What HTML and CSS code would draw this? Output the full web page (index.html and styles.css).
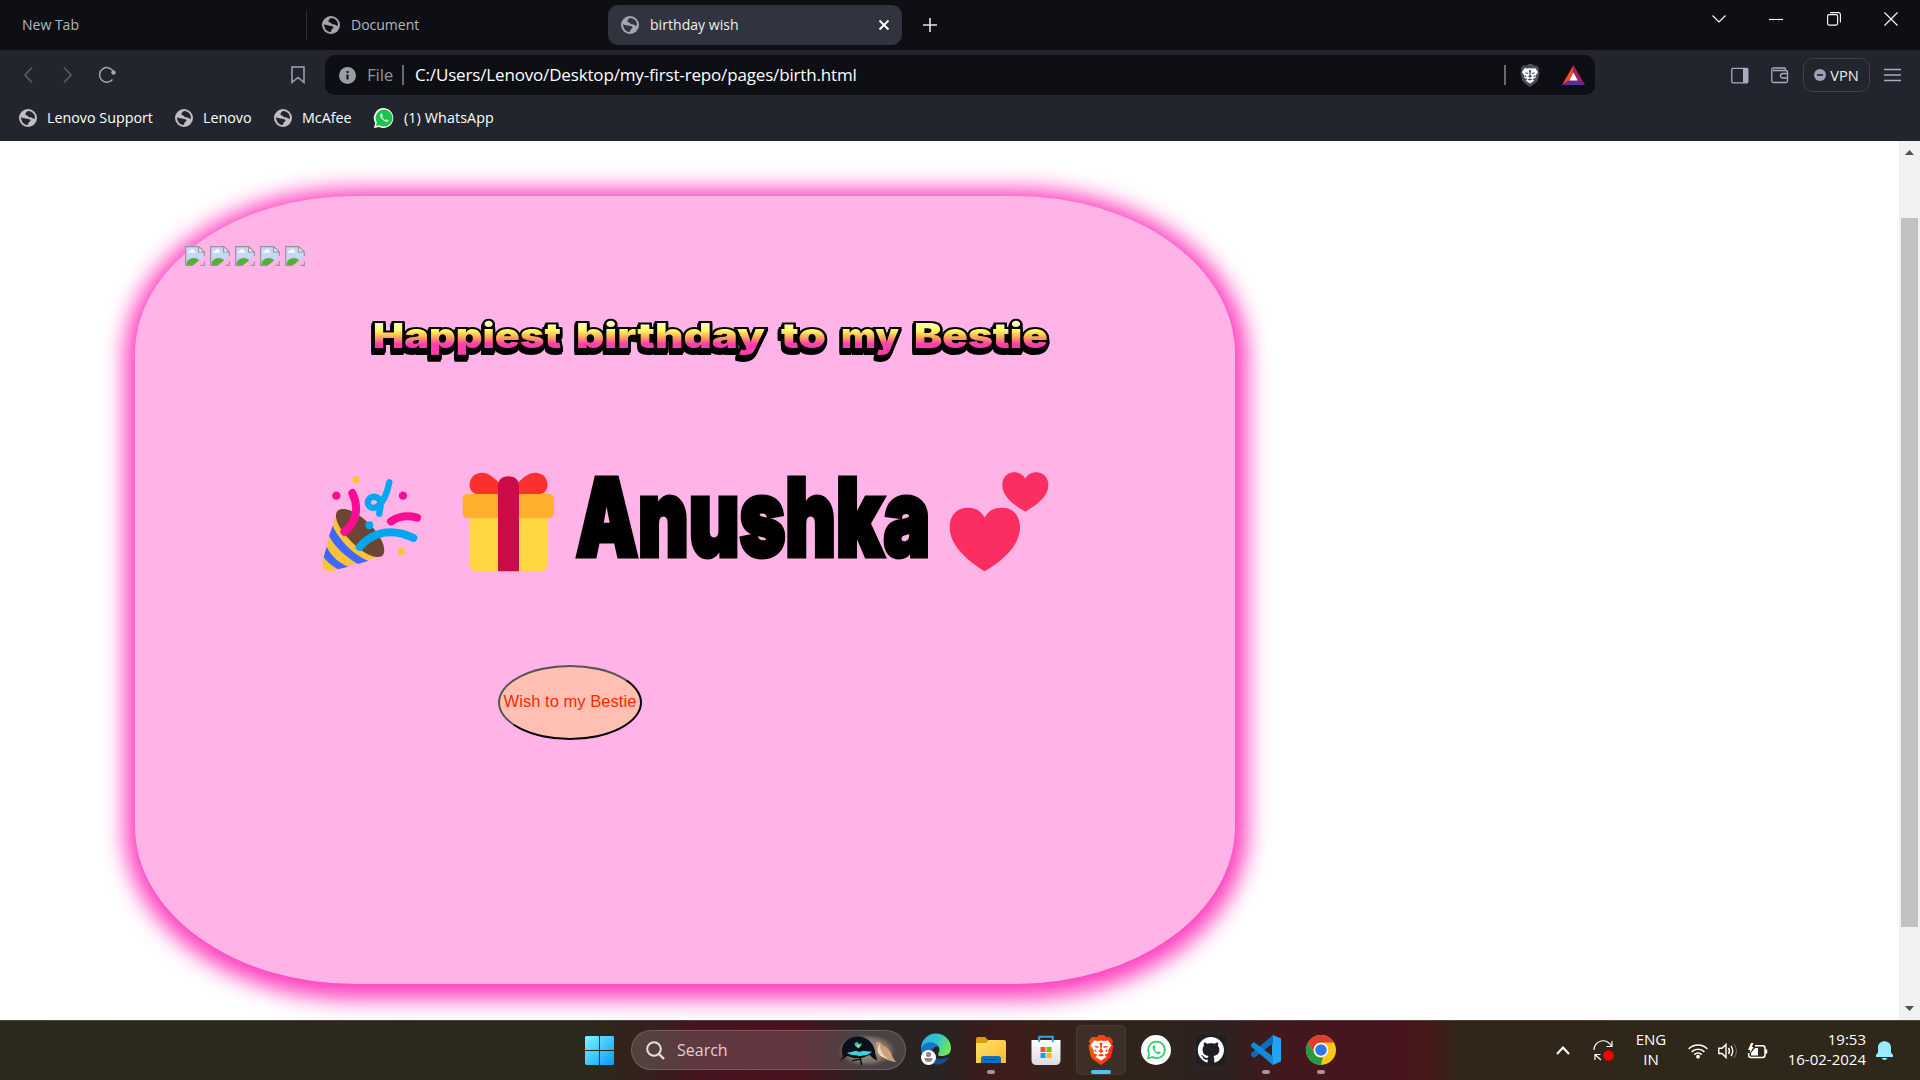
FILE: index.html
```html
<!DOCTYPE html>
<html lang="en">
<head>
<meta charset="utf-8">
<title>birthday wish</title>
<link rel="stylesheet" href="styles.css">
</head>
<body>
<svg class="defs" width="0" height="0">
  <defs>
    <symbol id="globe" viewBox="0 0 18 18"><circle cx="9" cy="9" r="9"/><path class="globe-sea" d="M9.2 2C11 2 13.500 3.200 15 5.200L16 8L15.500 10L13.700 9.200C12.700 8 12 8.700 10.500 8.300C9 8 9.400 6.600 8 6.500C5.700 6.300 6 3.500 9.200 2ZM2 8.200C3.600 9.300 5 9 6.700 9.400C9 10 11.600 9.800 11.500 11.500C11.300 13 9.700 12.700 9.400 14L9 15.900C5 15.900 2.300 13 2 8.200Z"/></symbol>
    <symbol id="broken" viewBox="0 0 60 60"><path d="M2 2H42L58 18V32L32 58H2Z" fill="#c5d7f4"/><path d="M5 57V48C14 34 32 33 43 43L27 58Z" fill="#59ae3b"/><path d="M9 20C9 14 15 14 16 14C18 6 27 8 27 14C31 14 31 20 28 20Z" fill="#fff"/><path d="M41 2V18H58Z" fill="#f7f7f7"/><path d="M27 58H2V2H41L58 18V30M41 2V18H58M46 58H58V46" fill="none" stroke="#969696" stroke-width="3.600"/><path d="M22 60L60 29V43L41 60Z" fill="#ffb3e6"/></symbol>
    <symbol id="lion" viewBox="0 0 26 30"><path d="M4 2L9 2L11 0H16L18 2L22 2L25 6L24 9L25.500 11L23 22Q22 24 13 30Q4 24 3 22L.5 11L2 9L1 6Z"/><path fill="#fff" d="M6 5.500L10 6L13 5.500L16 6L20 5.500L23.500 10.500L20 15.500L20.500 18L16.500 19.500L18.500 22L13 25.500L7.500 22L9.500 19.500L5.500 18L6 15.500L2.500 10.500Z"/><path d="M6 11L10.500 11.300L10.800 12.600L8.300 12.800ZM20 11L15.500 11.300L15.200 12.600L17.700 12.800ZM11.500 7.500L13 8L14.500 7.500L13.600 14L15.500 16.500L13 18L10.500 16.500L12.400 14ZM9.500 20.300L13 18.800L16.500 20.300L13 21.500ZM7 14L9 17L6.500 16.500ZM19 14L17 17L19.500 16.500Z"/></symbol>
    <linearGradient id="candy" gradientUnits="userSpaceOnUse" x1="0" y1="3" x2="0" y2="30"><stop offset="0" stop-color="#ffffe0"/><stop offset=".35" stop-color="#fffa66"/><stop offset=".58" stop-color="#ffae55"/><stop offset=".85" stop-color="#ff3eac"/><stop offset="1" stop-color="#ff3eac"/></linearGradient>
    <linearGradient id="win" x1="0" y1="0" x2="1" y2="1"><stop stop-color="#7df4ff"/><stop offset="1" stop-color="#079bff"/></linearGradient>
    <linearGradient id="edge1" x1="0" y1="0" x2="1" y2=".4"><stop stop-color="#2aa9ed"/><stop offset=".6" stop-color="#31c8c9"/><stop offset="1" stop-color="#6fe45b"/></linearGradient>
    <linearGradient id="fold" x1="0" y1="0" x2="1" y2="1"><stop stop-color="#ffe06b"/><stop offset="1" stop-color="#fcbd2b"/></linearGradient>
    <linearGradient id="brv" x1="0" y1="0" x2="1" y2="0"><stop stop-color="#ff5a08"/><stop offset="1" stop-color="#fb2a14"/></linearGradient>
    <linearGradient id="bag" x1="0" y1="0" x2="0" y2="1"><stop stop-color="#fff"/><stop offset="1" stop-color="#dcdcdc"/></linearGradient>
  </defs>
</svg>

<header class="chrome">
  <div class="tabs">
    <div class="tab tab-new"><span>New Tab</span></div>
    <div class="tab tab-doc"><svg class="globe dark"><use href="#globe"/></svg><span>Document</span></div>
    <div class="tab tab-active"><svg class="globe active"><use href="#globe"/></svg><span class="tab-title">birthday wish</span>
      <svg class="close" viewBox="0 0 10 10"><path d="M.5.5L9.500 9.500M9.500.5L.5 9.500"/></svg></div>
    <svg class="plus" viewBox="0 0 14 14"><path d="M7 0V14M0 7H14"/></svg>
    <div class="winbtns">
      <svg width="14" height="8" viewBox="0 0 14 8"><path d="M.5.5L7 7L13.500.5"/></svg>
      <svg width="14" height="14" viewBox="0 0 14 14"><path d="M0 7.500H14"/></svg>
      <svg width="14" height="14" viewBox="0 0 14 14"><rect x=".6" y="2.600" width="10" height="10.500" rx="1.500"/><path d="M3 .6H11.500Q13.400.6 13.400 2.500V10.500"/></svg>
      <svg width="14" height="14" viewBox="0 0 14 14"><path d="M.5.5L13.500 13.500M13.500.5L.5 13.500"/></svg>
    </div>
  </div>
  <div class="toolbar">
    <div class="nav">
      <svg class="dim" width="9" height="16" viewBox="0 0 9 16"><path d="M8 .5L1 8L8 15.500"/></svg>
      <svg class="dim" width="9" height="16" viewBox="0 0 9 16"><path d="M1 .5L8 8L1 15.500"/></svg>
      <svg class="reload" width="18" height="18" viewBox="0 0 18 18"><path d="M14.500 13.500A7.300 7.300 0 1 1 15.500 6"/><circle cx="15.500" cy="6.500" r="2.200"/></svg>
      <svg class="mark" width="14" height="18" viewBox="0 0 14 18"><path d="M1 1H13V16.500L7 11.500L1 16.500Z"/></svg>
    </div>
    <div class="omnibox">
      <svg class="info" width="17" height="17" viewBox="0 0 17 17"><circle cx="8.500" cy="8.500" r="8.500" fill="#9a9da3"/><path d="M8.500 7.500V12.500M8.500 4V6" stroke="#0e0f14" stroke-width="2"/></svg>
      <span class="scheme">File</span><i class="bar"></i><span class="url">C:/Users/Lenovo/Desktop/my-first-repo/pages/birth.html</span>
      <i class="bar end"></i>
      <svg class="shield" width="20" height="23"><use href="#lion"/></svg>
      <svg class="bat" width="23" height="20" viewBox="0 0 23 20"><path d="M11.500 0L0 20L8 15L11.500 8Z" fill="#ff4724"/><path d="M11.500 0L23 20L15 15L11.500 8Z" fill="#9e1f63"/><path d="M0 20H23L15.500 15H7.500Z" fill="#662d91"/><path d="M11.500 7.500L15.700 15.500H7.300Z" fill="#fff"/></svg>
    </div>
    <div class="tools">
      <svg width="18" height="17" viewBox="0 0 18 17"><rect x=".8" y="1.300" width="16" height="14.500" rx="1"/><path class="solid" d="M12 1H17V16H12Z"/></svg>
      <svg width="18" height="17" viewBox="0 0 18 17"><path d="M14.500 3.500V2Q14.500 1 13.500 1H2.500Q.8 1 .8 2.500V14Q.8 15.500 2.500 15.500H15Q16.500 15.500 16.500 14V5Q16.500 3.500 15 3.500H2M17 6.500H12Q9.500 6.500 9.500 8.700T12 11H17"/></svg>
      <div class="vpn"><svg width="12" height="12" viewBox="0 0 12 12"><circle cx="6" cy="6" r="6" fill="#9ea1b5" stroke="none"/><path d="M3 6H9" stroke="#22252d" stroke-width="1.700"/></svg><span>VPN</span></div>
      <svg width="17" height="14" viewBox="0 0 17 14"><path d="M0 1.500H17M0 7H17M0 12.500H17"/></svg>
    </div>
  </div>
  <nav class="bookmarks">
    <a class="bm bm1"><svg class="globe book"><use href="#globe"/></svg><span>Lenovo Support</span></a>
    <a class="bm bm2"><svg class="globe book"><use href="#globe"/></svg><span>Lenovo</span></a>
    <a class="bm bm3"><svg class="globe book"><use href="#globe"/></svg><span>McAfee</span></a>
    <a class="bm bm4"><svg class="wa-mini" viewBox="0 0 20 20"><path d="M10 0A10 10 0 1 1 5 19L0 20L1.200 15A10 10 0 0 1 10 0Z" fill="#fff"/><path d="M10 1.500A8.500 8.500 0 1 1 5.500 17.200L2 18L2.900 14.500A8.500 8.500 0 0 1 10 1.500Z" fill="#17c64b"/><path d="M7.200 5.500C5.500 7 6.500 9.500 8.500 11.600S13 14.500 14.500 12.700L12.500 11.300L11.300 12.300Q9 11.300 8 9L8.800 7.700L8 5.500Z" fill="#fff"/></svg><span>(1) WhatsApp</span></a>
  </nav>
</header>

<main class="view">
  <div class="page">
    <section class="card">
      <div class="images">
        <svg><use href="#broken"/></svg><svg><use href="#broken"/></svg><svg><use href="#broken"/></svg><svg><use href="#broken"/></svg><svg><use href="#broken"/></svg>
      </div>
      <svg class="headline" width="684" height="44" viewBox="0 0 684 44">
        <g class="candy">
          <text x="5" y="30" textLength="188" lengthAdjust="spacingAndGlyphs">Happiest</text>
          <text x="208" y="30" textLength="189" lengthAdjust="spacingAndGlyphs">birthday</text>
          <text x="413" y="30" textLength="45" lengthAdjust="spacingAndGlyphs">to</text>
          <text x="473" y="30" textLength="58" lengthAdjust="spacingAndGlyphs">my</text>
          <text x="546" y="30" textLength="134" lengthAdjust="spacingAndGlyphs">Bestie</text>
        </g>
      </svg>
      <div class="name-row">
        <svg class="party" width="100" height="102" viewBox="65 62 300 306">
          <path d="M112 181C132 165 180 190 214 228C247 264 262 303 244 318L205 328L96 362C76 366 61 352 67 330L106 196Z" fill="#fac33d"/>
          <path d="M112 181C132 165 180 190 214 228C247 264 262 303 244 318C220 327 180 304 145 265C108 225 100 194 112 181Z" fill="#6d4534"/>
          <path d="M97 226C116 269 164 317 204 331L173 341C137 321 103 289 86 257ZM79 289C92 318 121 341 144 349L113 357C93 345 77 332 70 320Z" fill="#4166ff"/>
          <g fill="none" stroke-linecap="round" stroke-width="24"><path d="M156 128C176 170 170 216 132 244" stroke="#fa0c94"/><path d="M272 213C295 198 320 194 350 202" stroke="#fa0c94"/><path d="M178 290C215 245 275 231 339 263" stroke="#00a6f0"/><path d="M267 96C260 130 250 154 233 167C216 182 195 164 205 148C215 132 242 139 241 162C240 178 237 183 237 190" stroke="#00a6f0" stroke-width="19"/></g>
          <circle cx="108" cy="136" r="12.500" fill="#fa0c94"/><circle cx="308" cy="136" r="12.500" fill="#fa0c94"/><circle cx="167" cy="88" r="11" fill="#fac33d"/><circle cx="303" cy="304" r="11" fill="#fac33d"/><circle cx="207" cy="225" r="12" fill="#00a6f0"/>
        </svg>
        <svg class="gift" width="93" height="102" viewBox="486 62 279 306">
          <path d="M530 131C504 126 502 93 522 75C544 60 569 66 595 96H656C682 66 708 60 730 75C749 93 747 126 721 131Z" fill="#fc312f"/>
          <path d="M509 200H742V342Q742 363 718 363H533Q509 363 509 342Z" fill="#ffd742"/>
          <rect x="488" y="131" width="274" height="73" rx="14" fill="#ffb02f"/>
          <path d="M594 363V110Q594 78 625.500 78Q657 78 657 110V363Z" fill="#cb0c48"/>
        </svg>
        <svg class="name" width="360" height="104" viewBox="572 462 360 104"><text x="576" y="556" textLength="354" lengthAdjust="spacingAndGlyphs">Anushka</text></svg>
        <svg class="hearts" width="100" height="102" viewBox="807 62 300 306">
          <path d="M914 202C903 182 887 172 864 172C829 172 809 197 809 231C809 285 862 331 914 363C968 331 1020 285 1020 231C1020 197 1000 172 966 172C941 172 924 182 914 202ZM1036 85C1030 73 1019 66 1003 66C980 66 967 83 967 104C967 139 1002 164 1036 184C1070 164 1105 139 1105 104C1105 83 1091 66 1070 66C1053 66 1042 73 1036 85Z" fill="#fa2e60"/>
        </svg>
      </div>
      <button class="wish">Wish to my Bestie</button>
    </section>
  </div>
  <div class="scroll">
    <svg width="9" height="5" viewBox="0 0 9 5"><path d="M0 5H9L4.500 0Z"/></svg>
    <div class="thumb"></div>
    <svg width="9" height="5" viewBox="0 0 9 5"><path d="M0 0H9L4.500 5Z"/></svg>
  </div>
</main>

<footer class="taskbar">
  <svg class="start" width="29" height="29" viewBox="0 0 29 29"><path fill="url(#win)" d="M1 0H14V14H0V1ZM15 0H28L29 1V14H15ZM0 15H14V29H1L0 28ZM15 15H29V28L28 29H15Z"/></svg>
  <div class="search">
    <svg width="19" height="19" viewBox="0 0 19 19"><circle cx="8" cy="8" r="6.800" fill="none" stroke="#e6dfe1" stroke-width="2"/><path d="M13 13L18 18" stroke="#e6dfe1" stroke-width="2.400"/></svg>
    <span>Search</span>
    <svg class="birds" width="60" height="33" viewBox="840 73 180 99">
      <defs><radialGradient id="glow"><stop stop-color="#b4a392"/><stop offset=".75" stop-color="#a08a7d" stop-opacity=".6"/><stop offset="1" stop-color="#80706a" stop-opacity="0"/></radialGradient></defs>
      <ellipse cx="927" cy="122" rx="88" ry="48" fill="url(#glow)"/>
      <path d="M846 154L855 140C845 112 862 84 893 81C928 78 951 104 952 132L958 153L944 145L935 136L912 145L890 146L868 139Z" fill="#0a0f1b"/>
      <path d="M867 130L894 123L904 127L914 123L942 126C929 140 911 136 905 140C894 135 881 139 867 130Z" fill="#3dcfe0"/>
      <path d="M906 142L911 166M906 149L882 153" stroke="#07090f" stroke-width="4"/>
      <path d="M889 101L898 96L903 104L910 99V108L902 116L893 111Z" fill="#46b5c9"/><path d="M897 104L905 107L901 117Z" fill="#f5e13d"/>
      <path d="M954 98L966 97L973 106C991 113 1000 128 1004 143L1014 158L998 154C980 150 960 137 957 124Z" fill="#c9a07a"/><path d="M964 101C966 125 977 140 991 147C972 145 958 134 959 121Z" fill="#ecd8bd"/><path d="M976 143L968 158M983 147L978 160" stroke="#5d4538" stroke-width="3"/>
    </svg>
  </div>
  <div class="apps">
    <div class="app"><svg width="30" height="30" viewBox="0 0 30 30"><path d="M0 14A15 15 0 0 1 30 13C30 19 26 21 20 21C16 21 17 19 18 17C21 8 8 8 4 15Z" fill="url(#edge1)"/><path d="M0 14C2 6 14 5 18 12C13 10 10 15 12 20C14 26 23 27 28 22C22 32 1 33 0 14Z" fill="#1476c9"/><path d="M12 13C8 20 14 28 28 22C25 28 19 31 13 29C6 26 6 16 12 13Z" fill="#114f96"/><circle cx="7.500" cy="22.500" r="7.500" fill="#fff"/><circle cx="7.500" cy="19.500" r="2.600" fill="#888"/><path d="M3.500 23H11.500Q11.500 27 7.500 27T3.500 23Z" fill="#888"/></svg></div>
    <div class="app running"><svg width="30" height="30" viewBox="0 0 30 30"><path d="M0 9V4Q0 2 2 2H9L12 5H28V9Z" fill="#dc9e08"/><path d="M0 8H10L13 5H28Q30 5 30 7V28H0Z" fill="url(#fold)"/><path d="M5 28V23.500Q5 21 7.500 21H22.500Q25 21 25 23.500V28Z" fill="#0b73c4"/><path d="M8 24.500H22" stroke="#0b4c87" stroke-width="1.200"/></svg></div>
    <div class="app"><svg width="30" height="30" viewBox="0 0 30 30"><path d="M.5 5H29.500V25Q29.500 30 24.500 30H5.500Q.5 30 .5 25Z" fill="url(#bag)"/><path d="M8.200 7V1.800H21.800V7" fill="none" stroke="#29a9e8" stroke-width="2"/><path d="M9.500 12H14.500V17H9.500Z" fill="#f15024"/><path d="M15.500 12H20.500V17H15.500Z" fill="#7fb80b"/><path d="M9.500 18H14.500V23H9.500Z" fill="#09a3ed"/><path d="M15.500 18H20.500V23H15.500Z" fill="#fdb80a"/></svg></div>
    <div class="app current"><svg class="brave" width="26" height="30"><use href="#lion"/></svg></div>
    <div class="app"><svg width="30" height="30" viewBox="0 0 30 30"><circle cx="15" cy="15" r="15" fill="#fff"/><path d="M15.500 6.700A8.200 8.200 0 1 1 11.500 22L7 23.200L8.200 18.700A8.200 8.200 0 0 1 15.500 6.700Z" fill="none" stroke="#25d366" stroke-width="1.700"/><path d="M12.500 10.300C10.500 12 12 14.800 14 16.900S18.500 19.800 20 17.700L17.800 16.200L16.700 17.200Q14.400 16.200 13.600 14L14.300 12.800L13.500 10.300Z" fill="#25d366"/></svg></div>
    <div class="app"><svg width="30" height="30" viewBox="0 0 30 30"><path d="M0 0H30V30H0Z" fill="#1f1f23"/><path transform="translate(1.800 2) scale(1.640)" fill="#fff" d="M8 0C3.580 0 0 3.580 0 8c0 3.540 2.290 6.530 5.470 7.590.4.070.55-.17.55-.38 0-.19-.01-.82-.01-1.490-2.010.37-2.530-.49-2.690-.94-.09-.23-.48-.94-.82-1.130-.28-.15-.68-.52-.01-.53.63-.01 1.080.58 1.230.82.72 1.210 1.870.87 2.330.66.07-.52.28-.87.51-1.070-1.780-.2-3.640-.89-3.640-3.950 0-.87.31-1.590.82-2.150-.08-.2-.36-1.020.08-2.120 0 0 .67-.21 2.200.82.64-.18 1.320-.27 2-.27s1.360.09 2 .27c1.530-1.040 2.200-.82 2.200-.82.44 1.100.16 1.920.08 2.120.51.56.82 1.270.82 2.150 0 3.070-1.870 3.750-3.650 3.950.29.25.54.73.54 1.480 0 1.070-.01 1.930-.01 2.200 0 .21.15.46.55.38A8.010 8.010 0 0 0 16 8c0-4.420-3.580-8-8-8z"/></svg></div>
    <div class="app running"><svg width="30" height="30" viewBox="0 0 30 30"><path d="M22 0L30 3.500V26.500L22 30L21 22V8Z" fill="#23a4f2"/><path d="M22 0V8.500L3 23L0 20.500V18.500Z" fill="#0a6fb8"/><path d="M22 30V21.500L3 7L0 9.500V11.500Z" fill="#128bd6"/></svg></div>
    <div class="app running"><svg width="30" height="30" viewBox="0 0 30 30"><circle cx="15" cy="15" r="15" fill="#fdc516"/><path d="M2 7.500A15 15 0 0 1 28 7.500H15A7.500 7.500 0 0 0 8.500 18.700Z" fill="#e33b2e"/><path d="M2 7.500L8.500 18.700A7.500 7.500 0 0 0 17 22.200L15 30A15 15 0 0 1 2 7.500Z" fill="#279847"/><path d="M21.500 18.700L15 30L17 22.200Z" fill="#fdc516"/><circle cx="15" cy="15" r="7.300" fill="#fff"/><circle cx="15" cy="15" r="5.800" fill="#2f78ec"/></svg></div>
  </div>
  <div class="tray">
    <svg width="14" height="9" viewBox="0 0 14 9"><path d="M1 8L7 1.500L13 8" stroke-width="2"/></svg>
    <svg class="sync" width="21" height="21" viewBox="0 0 21 21"><path d="M1 10A9.200 9.200 0 0 1 18.500 6M19 1V6.500H13.500M2 20V14.500H7.500M2 14.500L8 20" stroke-width="1.200"/><circle cx="15.500" cy="15.500" r="5.200" fill="#f00" stroke="none"/></svg>
    <div class="lang">ENG<br>IN</div>
    <svg class="wifi" width="20" height="16" viewBox="0 0 20 16"><path d="M.7 6A13 13 0 0 1 19.300 6M3.600 8.900A9 9 0 0 1 16.400 8.900M6.300 11.600A5.300 5.300 0 0 1 13.700 11.600" stroke-width="1.500"/><circle cx="10" cy="13.700" r="1.900" fill="#fff" stroke="none"/></svg>
    <svg class="vol" width="20" height="16" viewBox="0 0 20 16"><path d="M.8 5.300V10.500H4L8 14.500V1.500L4 5.300ZM10.500 5Q12.500 8 10.500 11M13 3Q16.500 8 13 13" stroke-width="1.400"/><path d="M16 1Q21 8 16 15" stroke="#6a6456" stroke-width="1.200"/></svg>
    <svg class="batt" width="20" height="16" viewBox="0 0 20 16"><path d="M7 2.700H14.500Q17 2.700 17 5.200V12Q17 14.500 14.500 14.500H3Q.7 14.500.7 12V10M18.500 6.500V10.500" stroke-width="1.500"/><path d="M3 0L0 7H2V10L5.500 4H3.800L5.500 0ZM3 12.500V10L7 5H10V12.500Z" fill="#fff" stroke="none"/></svg>
    <div class="clock">19:53<br>16-02-2024</div>
    <svg class="bell" width="17" height="19" viewBox="0 0 17 19"><path d="M0 14L2 11.500V6.500C2 -2 15 -2 15 6.500V11.500L17 14V16H0ZM5.500 17H11.500Q10.500 19 8.500 19T5.500 17Z" fill="#99ebff" stroke="none"/></svg>
  </div>
</footer>
</body>
</html>
```
FILE: styles.css
```css
* { box-sizing: border-box; }
body { margin: 0; width: 1920px; height: 1080px; overflow: hidden; display: flex; flex-direction: column; background: #fff; font-family: "Open Sans", "Noto Sans", sans-serif; }
svg { display: block; flex: none; overflow: visible; }
.defs { height: 0; flex: 0 0 0; }

/* browser window */
.chrome { height: 141px; flex: none; background: #22252d; color: #fff; font-size: 14px; white-space: nowrap; }
.chrome span { padding-bottom: 2px; }
.tabs { height: 50px; background: #0e0f14; display: flex; align-items: center; }
.tab { display: flex; align-items: center; gap: 12px; color: #b5b7bb; }
.tab-new { width: 307px; height: 30px; padding-left: 22px; border-right: 1px solid #2b2d33; }
.tab-doc { width: 301px; padding-left: 15px; gap: 11px; }
.tab-active { width: 294px; height: 40px; padding: 0 13px; gap: 11px; border-radius: 10px; background: #31343e; color: #eef0f2; }
.tab-title { flex: 1; letter-spacing: .05px; }
.globe { width: 18px; height: 18px; flex: none; }
.globe.dark { fill: #a3a5aa; color: #0e0f14; }
.globe.active { fill: #a3a6b0; color: #31343e; }
.globe.book { fill: #bdbfc4; color: #22252d; }
.globe-sea { fill: currentColor; }
.close { width: 10px; height: 10px; stroke: #fff; stroke-width: 1.8; }
.plus { width: 14px; height: 14px; margin-left: 21px; stroke: #e2e3e5; stroke-width: 1.6; }
.winbtns { margin-left: auto; height: 37px; align-self: flex-start; display: flex; align-items: center; gap: 43.3px; padding-right: 22px; fill: none; stroke: #fff; stroke-width: 1.1; }
.toolbar { height: 50px; display: flex; align-items: center; }
.nav { width: 325px; display: flex; align-items: center; padding-left: 24px; gap: 30px; fill: none; stroke: #9fa6b3; stroke-width: 1.5; }
.dim { stroke: #5c5f68; }
.nav .reload { margin-left: -4px; }
.reload circle { fill: #9fa6b3; stroke: none; }
.mark { margin-left: 145px; }
.omnibox { width: 1270px; height: 40px; border-radius: 10px; background: #0e0f14; display: flex; align-items: center; padding-left: 14px; font-size: 17px; }
.scheme { width: 35px; margin-left: 11px; color: #8f9297; letter-spacing: -.2px; }
.bar { width: 2px; height: 20px; background: #686b70; }
.url { margin-left: 11px; letter-spacing: -.16px; }
.end { margin-left: auto; }
.shield { margin-left: 14px; fill: #4a4c5c; }
.bat { margin: 0 10px 0 22px; }
.tools { margin-left: auto; display: flex; align-items: center; padding-right: 19px; gap: 22px; fill: none; stroke: #a3adbd; stroke-width: 1.3; }
.solid { fill: #a3adbd; stroke: none; }
.vpn { width: 67px; height: 34px; border: 1px solid #3d424c; border-radius: 10px; display: flex; align-items: center; justify-content: center; gap: 4px; font-size: 14.600px; color: #eee; margin-right: -8px; margin-left: -8px; }
.vpn span { padding: 0; }
.bookmarks { height: 36px; display: flex; align-items: center; padding-left: 19px; }
.bm { display: flex; align-items: center; gap: 10px; font-size: 14.300px; }
.bm1 { width: 156px; }
.bm2 { width: 99px; }
.bm3 { width: 99px; }
.bm4 { gap: 10px; padding-left: 1px; letter-spacing: .1px; }
.wa-mini { width: 20px; height: 20px; }

/* page */
.view { height: 879px; flex: none; display: flex; overflow: hidden; }
.page { flex: 1; overflow: hidden; padding: 55px 0 0 135px; }
.card { width: 1100px; height: 788px; padding: 50px; border-radius: 20%; background: #ffb3e6; box-shadow: 1px 4px 22px 11px #ff3dbd; display: flex; flex-direction: column; align-items: flex-start; }
.images { display: flex; gap: 5px; }
.images svg { width: 20px; height: 20px; }
.headline { margin: 52px 0 0 183px; }
.candy { font: 900 34.500px Inter, "DejaVu Sans", sans-serif; fill: url(#candy); stroke: #000; stroke-width: 4px; paint-order: stroke; stroke-linejoin: miter; stroke-miterlimit: 3; filter: drop-shadow(0 2px 0 #000) drop-shadow(-1px 2px 0 #000) drop-shadow(0 1px 0 #000); }
.name-row { display: flex; margin: 109px 0 0 137px; }
.gift { margin-left: 40px; }
.name { margin: -9px 0 0 17px; }
.name text { font: 900 107px Inter, "Open Sans", sans-serif; stroke: #000; stroke-width: 5px; stroke-linejoin: miter; stroke-miterlimit: 3; }
.hearts { margin-left: 17px; }
.wish { width: 144px; height: 75px; margin: 92px 0 0 313px; padding: 0 0 2px; border: 2px outset #000; border-radius: 50%; background: #ffc0b3; color: #f12b05; font: 16.600px "Liberation Sans", Arial, sans-serif; white-space: nowrap; }
.scroll { width: 21px; background: #f1f1f1; padding: 9px 2px 9px; display: flex; flex-direction: column; align-items: center; fill: #505050; }
.thumb { width: 17px; height: 709px; margin: 63px 0 auto; background: #c1c1c1; }

/* taskbar */
.taskbar { height: 60px; flex: none; display: flex; align-items: center; border-top: 1px solid #4c453f; color: #fff; background: linear-gradient(90deg, #2c291f 0, #2d281c 590px, #35201d 650px, #46151f 700px, #49131e 800px, #2c2221 860px, #282322 940px, #401b1a 1000px, #35221a 1060px, #302419 1120px, #2d2221 1220px, #42181c 1280px, #48151f 1400px, #451918 1430px, #302619 1460px, #2e281a 100%); }
.start { margin-left: 585px; }
.search { width: 275px; height: 40px; margin-left: 17px; margin-top: -1px; padding: 0 7px 0 14px; border: 1px solid rgba(255,255,255,.16); border-radius: 20px; background: rgba(255,255,255,.15); display: flex; align-items: center; font-size: 16px; color: #ddd0d3; }
.search span { margin-left: 12px; flex: 1; }
.apps { display: flex; margin-left: 2px; margin-top: -2px; align-items: center; }
.app { width: 55px; height: 50px; padding-top: 10px; display: grid; justify-items: center; align-content: start; gap: 5px; }
.running::after, .current::after { content: ""; width: 8px; height: 4px; border-radius: 2px; background: #a69796; }
.current { width: 50px; margin: 0 2.5px; background: rgba(255,255,255,.06); border-radius: 5px; box-shadow: inset 0 0 0 1px rgba(255,255,255,.06); }
.current::after { width: 20px; background: #4cc2ff; }
.brave { fill: url(#brv); }
.tray { margin-left: auto; padding-right: 27px; display: flex; align-items: center; fill: none; stroke: #fff; font-size: 15px; line-height: 20px; }
.tray div { margin-top: -4px; }
.sync { margin-left: 23px; }
.lang { width: 40px; margin-left: 17px; text-align: center; }
.wifi { margin-left: 17px; }
.vol { margin-left: 10px; }
.batt { margin-left: 10px; }
.clock { width: 90px; margin-left: 8px; text-align: right; white-space: nowrap; }
.bell { margin-left: 10px; }
```
